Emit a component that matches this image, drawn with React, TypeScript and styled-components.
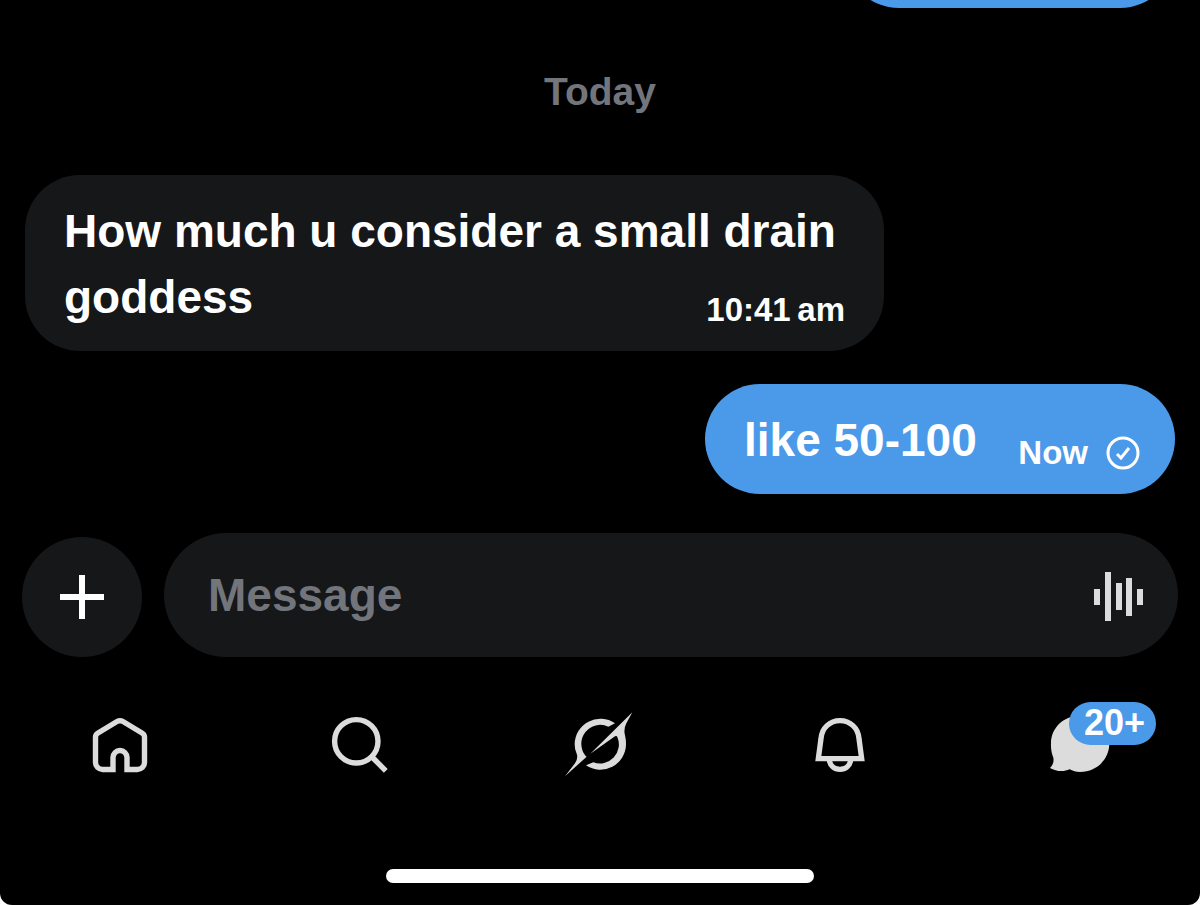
import React from "react";
import styled, { createGlobalStyle } from "styled-components";

const colors = {
  accent: "#4b99e9",
  surface: "#161719",
  muted: "#72757c",
  icon: "#dcdcdc",
};

const GlobalStyle = createGlobalStyle`
  * { box-sizing: border-box; }
  body {
    margin: 0;
    background: #fff;
    font-family: "Liberation Sans", Arial, sans-serif;
    font-weight: 700;
  }
  button, input { font: inherit; border: 0; padding: 0; }
`;

const Screen = styled.div`
  display: flex;
  flex-direction: column;
  height: 100vh;
  background: #000;
  color: #fff;
  border-radius: 0 0 12px 12px;
  overflow: hidden;
`;

const Thread = styled.main`
  flex: 1;
  min-height: 0;
  display: flex;
  flex-direction: column;
  justify-content: flex-end;
  padding: 0 25px 39px;
  overflow: hidden;
`;

const DayLabel = styled.h2`
  flex: none;
  margin: 56px 0;
  color: ${colors.muted};
  font-size: 39px;
  line-height: 55px;
  text-align: center;
`;

const Bubble = styled.div<{ $own?: boolean }>`
  flex: none;
  align-self: ${(p) => (p.$own ? "flex-end" : "flex-start")};
  width: fit-content;
  min-width: ${(p) => (p.$own ? "470px" : "0")};
  max-width: 859px;
  padding: 23px ${(p) => (p.$own ? "35px" : "39px")} 21px 39px;
  border-radius: 55px;
  background: ${(p) => (p.$own ? colors.accent : colors.surface)};
  font-size: 46px;
  line-height: 66px;

  & + & {
    margin-top: 33px;
  }
`;

const EarlierBubble = styled(Bubble)`
  min-width: 0;
  width: 331px;
  height: 110px;
`;

const Meta = styled.span`
  float: right;
  display: flex;
  align-items: center;
  gap: 18px;
  margin: 21px 0 -5px 19px;
  font-size: 33px;
  line-height: 50px;
`;

const Composer = styled.form`
  flex: none;
  display: flex;
  align-items: flex-end;
  gap: 22px;
  padding: 0 22px;
`;

const AddButton = styled.button`
  display: grid;
  place-items: center;
  flex: none;
  width: 120px;
  height: 120px;
  border-radius: 50%;
  background: ${colors.surface};
  color: #fff;
`;

const Field = styled.div`
  flex: 1;
  display: flex;
  align-items: center;
  height: 124px;
  padding: 0 34px 0 44px;
  border-radius: 62px;
  background: ${colors.surface};
`;

const MessageInput = styled.input`
  flex: 1;
  min-width: 0;
  height: 66px;
  background: transparent;
  color: #fff;
  font-size: 46px;
  outline: none;

  &::placeholder {
    color: ${colors.muted};
    opacity: 1;
  }
`;

const VoiceButton = styled.button`
  display: grid;
  background: transparent;
  color: ${colors.icon};
`;

const TabBar = styled.nav`
  flex: none;
  display: flex;
  padding-top: 52px;
`;

const Tab = styled.a`
  position: relative;
  flex: 1;
  display: grid;
  place-items: center;
  height: 72px;
  color: ${colors.icon};
`;

const Badge = styled.span`
  position: absolute;
  top: -7px;
  left: 50%;
  margin-left: -11px;
  min-width: 87px;
  height: 43px;
  padding-left: 4px;
  border-radius: 22px;
  background: ${colors.accent};
  color: #fff;
  font-size: 36px;
  line-height: 41px;
  text-align: center;
`;

const HomeIndicator = styled.div`
  flex: none;
  align-self: center;
  width: 428px;
  height: 14px;
  margin: 88px 0 22px;
  border-radius: 7px;
  background: #fff;
`;

const SentIcon = () => (
  <svg width="34" height="34" viewBox="0 0 34 34" fill="none" stroke="currentColor" strokeWidth="3">
    <circle cx="17" cy="17" r="15" />
    <path d="M11 18l4 4 8-10" />
  </svg>
);

const PlusIcon = () => (
  <svg width="44" height="44" viewBox="0 0 44 44" stroke="currentColor" strokeWidth="6">
    <path d="M22 0v44M0 22h44" />
  </svg>
);

const VoiceIcon = () => (
  <svg width="50" height="52" viewBox="0 -3 50 52" fill="currentColor">
    <path d="M0 17h6v16H0zM11 0h6v49h-6zM22 11h6v27h-6zM32 6h6v38h-6zM43 17h6v16h-6z" />
  </svg>
);

const HomeIcon = () => (
  <svg width="60" height="60" viewBox="0 0 60 60" fill="none" stroke="currentColor" strokeWidth="5.4">
    <path d="M23 54.5H12.5A7 7 0 0 1 5.5 47.5V22Q5.5 19.5 8 18L27 6.5Q30 4.8 33 6.5L52 18Q54.5 19.5 54.5 22V47.5A7 7 0 0 1 47.5 54.5H37V42.5A7 7 0 0 0 23 42.5Z" />
  </svg>
);

const SearchIcon = () => (
  <svg width="60" height="60" viewBox="0 0 60 60" fill="none" stroke="currentColor" strokeWidth="5.4">
    <circle cx="26.3" cy="26.3" r="21.7" />
    <path d="M41.5 41.5L55.8 55.8" />
  </svg>
);

const GrokIcon = () => (
  <svg width="72" height="72" viewBox="27 27 216 216" fill="currentColor">
    <path d="M180 70A77 77 0 0 0 59 133Q59 147 64 158Q71 174 60 190L30 229L95 170L92 168A57 57 0 0 1 160 80Z" />
    <path d="M232 37L106 161L180 109Q185 106 187 111A57 57 0 0 1 115 187L93 196A77 77 0 0 0 213 133Q213 118 210 106Q205 88 214 70Z" />
  </svg>
);

const BellIcon = () => (
  <svg width="60" height="60" viewBox="30 45 180 180" fill="none" stroke="currentColor" strokeWidth="16">
    <path d="M55 176L63 116C65 84 90 62 120 62S175 84 177 116L185 176Z" />
    <path d="M88 180C90 197 103 208 120 208S150 197 152 180" />
  </svg>
);

const ChatIcon = () => (
  <svg width="60" height="60" viewBox="60 75 180 180" fill="currentColor">
    <path d="M150 77C198 77 238 112 238 160C238 208 200 246 150 246C138 246 128 243 119 238C100 247 78 244 60 234C70 224 72 213 70 203C65 190 62 176 63 160C63 112 102 77 150 77Z" />
  </svg>
);

export default function App() {
  return (
    <>
      <GlobalStyle />
      <Screen>
        <Thread>
          <EarlierBubble $own />
          <DayLabel>Today</DayLabel>
          <Bubble>
            How much u consider a small drain goddess
            <Meta>10:41{"\u2009"}am</Meta>
          </Bubble>
          <Bubble $own>
            like 50-100
            <Meta>
              Now <SentIcon />
            </Meta>
          </Bubble>
        </Thread>
        <Composer onSubmit={(e) => e.preventDefault()}>
          <AddButton type="button" aria-label="Add attachment">
            <PlusIcon />
          </AddButton>
          <Field>
            <MessageInput type="text" placeholder="Message" aria-label="Message" />
            <VoiceButton type="button" aria-label="Record voice message">
              <VoiceIcon />
            </VoiceButton>
          </Field>
        </Composer>
        <TabBar>
          <Tab href="#home" aria-label="Home"><HomeIcon /></Tab>
          <Tab href="#search" aria-label="Search"><SearchIcon /></Tab>
          <Tab href="#grok" aria-label="Grok"><GrokIcon /></Tab>
          <Tab href="#notifications" aria-label="Notifications"><BellIcon /></Tab>
          <Tab href="#messages" aria-label="Messages">
            <ChatIcon />
            <Badge>20+</Badge>
          </Tab>
        </TabBar>
        <HomeIndicator />
      </Screen>
    </>
  );
}
